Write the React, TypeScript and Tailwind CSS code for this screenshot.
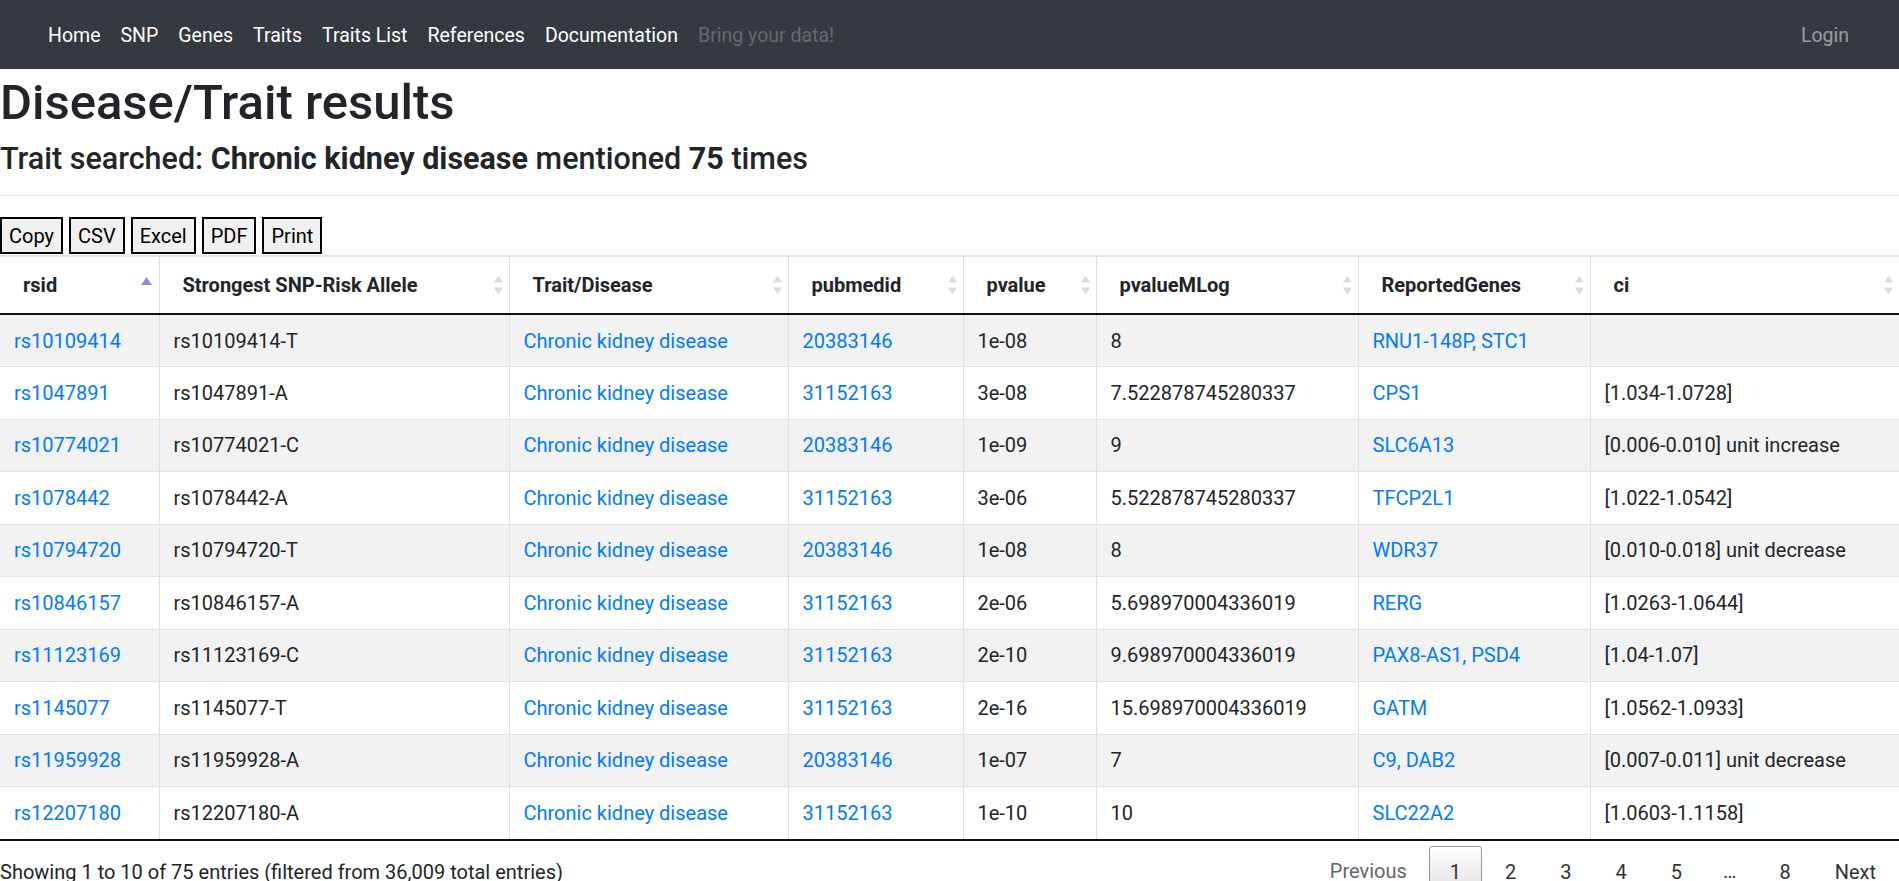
import React from "react";

const rows = [
  ["rs10109414", "rs10109414-T", "20383146", "1e-08", "8", "RNU1-148P, STC1", ""],
  ["rs1047891", "rs1047891-A", "31152163", "3e-08", "7.522878745280337", "CPS1", "[1.034-1.0728]"],
  ["rs10774021", "rs10774021-C", "20383146", "1e-09", "9", "SLC6A13", "[0.006-0.010] unit increase"],
  ["rs1078442", "rs1078442-A", "31152163", "3e-06", "5.522878745280337", "TFCP2L1", "[1.022-1.0542]"],
  ["rs10794720", "rs10794720-T", "20383146", "1e-08", "8", "WDR37", "[0.010-0.018] unit decrease"],
  ["rs10846157", "rs10846157-A", "31152163", "2e-06", "5.698970004336019", "RERG", "[1.0263-1.0644]"],
  ["rs11123169", "rs11123169-C", "31152163", "2e-10", "9.698970004336019", "PAX8-AS1, PSD4", "[1.04-1.07]"],
  ["rs1145077", "rs1145077-T", "31152163", "2e-16", "15.698970004336019", "GATM", "[1.0562-1.0933]"],
  ["rs11959928", "rs11959928-A", "20383146", "1e-07", "7", "C9, DAB2", "[0.007-0.011] unit decrease"],
  ["rs12207180", "rs12207180-A", "31152163", "1e-10", "10", "SLC22A2", "[1.0603-1.1158]"],
];

const headers = [
  "rsid",
  "Strongest SNP-Risk Allele",
  "Trait/Disease",
  "pubmedid",
  "pvalue",
  "pvalueMLog",
  "ReportedGenes",
  "ci",
];

function SortBoth() {
  return (
    <svg
      className="absolute right-[6px] top-1/2 -translate-y-1/2"
      width="9"
      height="19"
      viewBox="0 0 9 19"
    >
      <path d="M4.5 0 L9 7 L0 7 Z" fill="#dcdcdc" />
      <path d="M4.5 19 L9 12 L0 12 Z" fill="#dcdcdc" />
    </svg>
  );
}

function SortAsc() {
  return (
    <svg
      className="absolute right-[7px] top-[20px]"
      width="11"
      height="8"
      viewBox="0 0 11 8"
    >
      <path d="M5.5 0 L11 8 L0 8 Z" fill="#8a8ce0" />
    </svg>
  );
}

export default function App() {
  const font = { fontFamily: '"Segoe UI", Roboto, "Noto Sans", sans-serif' };
  return (
    <div className="h-screen w-full overflow-hidden bg-white text-[#212529]" style={font}>
      <nav className="flex h-[69px] items-center bg-[#343a40] pl-[38px] pr-[40px] pt-[3px] text-[19.5px]">
        <div className="flex items-center">
          {["Home", "SNP", "Genes", "Traits", "Traits List", "References", "Documentation"].map((t) => (
            <a key={t} className="px-[10px] text-white">
              {t}
            </a>
          ))}
          <a className="px-[10px] text-[rgba(255,255,255,0.25)]">Bring your data!</a>
        </div>
        <div className="ml-auto">
          <a className="px-[10px] text-[rgba(255,255,255,0.5)]">Login</a>
        </div>
      </nav>

      <h1 className="m-0 pt-[4px] text-[49px] font-medium leading-[60px]">Disease/Trait results</h1>
      <h4 className="mt-[8px] text-[30.5px] font-medium leading-[36px]">
        Trait searched: <b className="font-bold">Chronic kidney disease</b> mentioned{" "}
        <b className="font-bold">75</b> times
      </h4>
      <hr className="mt-[18px] border-0 border-t border-[rgba(0,0,0,0.1)]" />

      <div className="mt-[21px] flex gap-[6px]">
        {["Copy", "CSV", "Excel", "PDF", "Print"].map((b) => (
          <button
            key={b}
            className="h-[37px] border-2 border-black bg-[#f0f0f0] px-[7px] text-[20px] leading-none text-black"
          >
            {b}
          </button>
        ))}
      </div>

      <table className="mt-[1px] w-full table-fixed border-collapse text-[20px]">
        <colgroup>
          <col className="w-[159px]" />
          <col className="w-[350px]" />
          <col className="w-[279px]" />
          <col className="w-[175px]" />
          <col className="w-[133px]" />
          <col className="w-[262px]" />
          <col className="w-[232px]" />
          <col />
        </colgroup>
        <thead>
          <tr>
            {headers.map((h, i) => (
              <th
                key={h}
                className={`relative h-[58px] border-t-2 border-b-2 border-t-[#dee2e6] border-b-[#111] pl-[23px] text-left font-bold ${
                  i > 0 ? "border-l border-l-[#dee2e6]" : ""
                }`}
              >
                {h}
                {i === 0 ? <SortAsc /> : <SortBoth />}
              </th>
            ))}
          </tr>
        </thead>
        <tbody>
          {rows.map((r, idx) => {
            const bg = idx % 2 === 0 ? "bg-[#f2f2f2]" : "bg-white";
            const cells: [string, boolean][] = [
              [r[0], true],
              [r[1], false],
              ["Chronic kidney disease", true],
              [r[2], true],
              [r[3], false],
              [r[4], false],
              [r[5], true],
              [r[6], false],
            ];
            return (
              <tr key={r[0]} className={`${bg} h-[52.5px]`}>
                {cells.map(([c, link], i) => (
                  <td
                    key={i}
                    className={`whitespace-nowrap pl-[14px] ${
                      idx < 9 ? "border-b border-b-[#dee2e6]" : ""
                    } ${i > 0 ? "border-l border-l-[#dee2e6]" : ""} ${link ? "text-[#007bff]" : ""}`}
                  >
                    {c}
                  </td>
                ))}
              </tr>
            );
          })}
        </tbody>
      </table>
      <div className="border-t-2 border-[#111]" />

      <div className="flex items-start justify-between text-[20px]">
        <div className="pt-[16px] leading-[30px]">
          Showing 1 to 10 of 75 entries (filtered from 36,009 total entries)
        </div>
        <div className="flex items-start pt-[5px] pr-[2px] text-[#333]">
          <a className="px-[20px] py-[10px] leading-[30px] text-[#666]">Previous</a>
          <a className="ml-[2px] min-w-[30px] rounded-[3px] border border-[#979797] bg-gradient-to-b from-white to-[#dcdcdc] px-[20px] py-[10px] leading-[30px]">
            1
          </a>
          {["2", "3", "4", "5"].map((p) => (
            <a key={p} className="ml-[2px] border border-transparent px-[20px] py-[10px] leading-[30px]">
              {p}
            </a>
          ))}
          <span className="px-[20px] py-[10px] leading-[30px]">…</span>
          <a className="ml-[2px] border border-transparent px-[20px] py-[10px] leading-[30px]">8</a>
          <a className="ml-[2px] border border-transparent px-[20px] py-[10px] leading-[30px]">Next</a>
        </div>
      </div>
    </div>
  );
}
